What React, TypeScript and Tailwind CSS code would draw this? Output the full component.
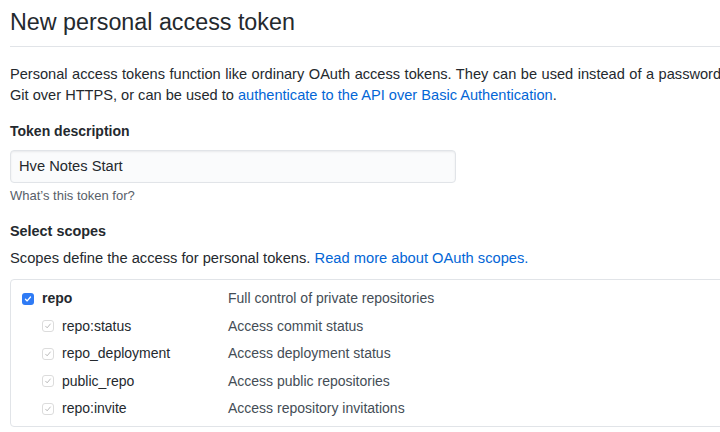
import React from 'react'

const scopes = [
  { name: 'repo:status', desc: 'Access commit status' },
  { name: 'repo_deployment', desc: 'Access deployment status' },
  { name: 'public_repo', desc: 'Access public repositories' },
  { name: 'repo:invite', desc: 'Access repository invitations' },
]

function Check({ active }: { active?: boolean }) {
  if (active) {
    return (
      <span className="flex h-[12px] w-[12px] items-center justify-center rounded-[3px] bg-[#2f7bf5]">
        <svg viewBox="0 0 12 12" className="h-[10px] w-[10px]">
          <path d="M3 6.3 L5 8.3 L9 3.6" fill="none" stroke="#fff" strokeWidth="1.6" strokeLinecap="round" strokeLinejoin="round" />
        </svg>
      </span>
    )
  }
  return (
    <span className="flex h-[12px] w-[12px] items-center justify-center rounded-[3px] border border-[#dcdcdc] bg-white">
      <svg viewBox="0 0 12 12" className="h-[10px] w-[10px]">
        <path d="M3.2 6.3 L5 8.2 L8.8 3.6" fill="none" stroke="#b5b5b5" strokeWidth="1.1" strokeLinecap="round" strokeLinejoin="round" />
      </svg>
    </span>
  )
}

export default function App() {
  return (
    <div className="h-[432px] w-[720px] overflow-hidden bg-white px-[10px] font-['Liberation_Sans',Arial,sans-serif] text-[#24292e]">
      <h1 className="w-[760px] border-b border-[#e1e4e8] pt-[6px] pb-[8px] text-[23.3px] leading-[32px] font-normal">
        New personal access token
      </h1>

      <p className="mt-[17px] w-[760px] text-[14.6px] leading-[21px]">
        <span className="[word-spacing:0.45px]">
          Personal access tokens function like ordinary OAuth access tokens. They can be used instead of a password
        </span>
        <br />
        Git over HTTPS, or can be used to <span className="text-[#0366d6]">authenticate to the API over Basic Authentication</span>.
      </p>

      <div className="mt-[15px] text-[14px] leading-[21px] font-bold">Token description</div>
      <div className="mt-[8px] flex h-[33px] w-[446px] items-center rounded-[4px] border border-[#e1e4e8] bg-[#fafbfc] px-[8px] text-[14.7px] shadow-[inset_0_1px_2px_rgba(27,31,35,0.075)]">
        Hve Notes Start
      </div>
      <div className="mt-[4px] text-[13px] leading-[18px] text-[#586069]">What’s this token for?</div>

      <div className="mt-[16px] text-[14.4px] leading-[21px] font-bold">Select scopes</div>
      <p className="mt-[6px] text-[14.7px] leading-[21px]">
        Scopes define the access for personal tokens. <span className="text-[#0366d6]">Read more about OAuth scopes.</span>
      </p>

      <div className="mt-[10px] w-[760px] rounded-[4px] border border-[#e1e4e8] pt-[5px] pb-[3px] text-[14px]">
        <div className="flex h-[27.5px] items-center">
          <div className="flex w-[217px] items-center pl-[11px]">
            <Check active />
            <span className="ml-[8px] font-bold">repo</span>
          </div>
          <span className="text-[#444d56]">Full control of private repositories</span>
        </div>
        {scopes.map((s) => (
          <div key={s.name} className="flex h-[27.5px] items-center">
            <div className="flex w-[217px] items-center pl-[31px]">
              <Check />
              <span className="ml-[8px]">{s.name}</span>
            </div>
            <span className="text-[#444d56]">{s.desc}</span>
          </div>
        ))}
      </div>
    </div>
  )
}
